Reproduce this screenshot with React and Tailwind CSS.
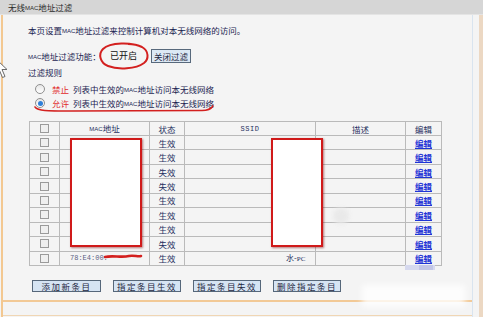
import React from "react";

const Mac = () => <span className="text-[6px] font-['Liberation_Sans',sans-serif] align-[1px]">MAC</span>;

const rows = ["生效", "生效", "失效", "失效", "生效", "生效", "生效", "失效", "生效"];

function Radio({ checked }) {
  return (
    <span className="w-[10px] h-[10px] rounded-full border border-[#8f8f8f] bg-gradient-to-b from-[#e6e6e6] to-[#ffffff] flex items-center justify-center">
      {checked && <span className="w-[5px] h-[5px] rounded-full bg-[#2f7fd8]" />}
    </span>
  );
}

function Btn({ children, w }) {
  return (
    <div className={`${w} h-[12px] bg-[#d6e4f3] border border-[#56677a] flex items-center justify-center text-[8.5px] leading-none tracking-[1.5px] text-[#1e2740]`}>
      {children}
    </div>
  );
}

export default function App() {
  return (
    <div className="relative w-[483px] h-[317px] overflow-hidden bg-[#f4f4f4] font-['Noto_Sans_CJK_SC','Liberation_Sans',sans-serif] text-[#1b2452]">
      <div className="h-[15px] bg-[#d6d6d6] border-b border-[#e4e4e4] pl-[8px] text-[8.5px] leading-[14px] text-[#2a2a2a]">
        无线<Mac />地址过滤
      </div>
      <div className="flex h-[302px]">
        <div className="w-[1px]" />
        <div className="w-[2px] bg-[#f3c891]" />
        <div className="w-[469px] flex flex-col">
          <div className="pl-[25px] text-[8.5px] leading-[12px] mt-[9px] whitespace-nowrap">
            本页设置<Mac />地址过滤来控制计算机对本无线网络的访问。
          </div>
          <div className="pl-[25px] mt-[12px] h-[14px] flex items-center text-[8.5px] whitespace-nowrap">
            <span className="w-[72px] shrink-0 whitespace-nowrap"><Mac />地址过滤功能：</span>
            <span className="ml-[10px] text-[#111] text-[9px] shrink-0">已开启</span>
            <div className="ml-[14px] w-[40px] h-[14px] shrink-0 bg-[#dce8f4] border border-[#58697c] flex items-center justify-center text-[8.5px] text-[#1e2740]">
              关闭过滤
            </div>
          </div>
          <div className="pl-[25px] mt-[3px] text-[8.5px] leading-[12px]">过滤规则</div>
          <div className="pl-[32px] mt-[5px] h-[12px] flex items-center text-[8.5px] whitespace-nowrap">
            <Radio />
            <span className="ml-[7px] text-[#e12a2a]">禁止</span>
            <span className="ml-[4px]">列表中生效的<Mac />地址访问本无线网络</span>
          </div>
          <div className="pl-[32px] mt-[2px] h-[12px] flex items-center text-[8.5px] whitespace-nowrap">
            <Radio checked />
            <span className="ml-[7px] text-[#e12a2a]">允许</span>
            <span className="ml-[4px]">列表中生效的<Mac />地址访问本无线网络</span>
          </div>
          <div className="pl-[26px] mt-[12px]">
            <table className="border-collapse w-[412px] table-fixed text-[8.5px] text-[#263060]">
              <colgroup>
                <col className="w-[30px]" />
                <col className="w-[90px]" />
                <col className="w-[35px]" />
                <col className="w-[131px]" />
                <col className="w-[90px]" />
                <col className="w-[36px]" />
              </colgroup>
              <thead>
                <tr className="h-[14px]">
                  <th className="border border-[#bababa] p-0 font-normal">
                    <div className="w-[9px] h-[9px] mx-auto border border-[#9a9a9a] bg-[#efefef]" />
                  </th>
                  <th className="border border-[#bababa] p-0 font-normal leading-[12px]"><Mac />地址</th>
                  <th className="border border-[#bababa] p-0 font-normal leading-[12px]">状态</th>
                  <th className="border border-[#bababa] p-0 font-normal leading-[12px] font-['Liberation_Mono',monospace] text-[7px] tracking-[0.5px]">SSID</th>
                  <th className="border border-[#bababa] p-0 font-normal leading-[12px]">描述</th>
                  <th className="border border-[#bababa] p-0 font-normal leading-[12px]">编辑</th>
                </tr>
              </thead>
              <tbody>
                {rows.map((s, i) => (
                  <tr key={i} className="h-[14.45px]">
                    <td className="border border-[#bababa] p-0">
                      <div className="w-[9px] h-[9px] mx-auto border border-[#9a9a9a] bg-[#efefef]" />
                    </td>
                    <td className="border border-[#bababa] p-0 leading-[12px]">
                      {i === rows.length - 1 && (
                        <div className="pl-[10px] flex items-center font-['Liberation_Mono',monospace] text-[7px] text-[#5b6283]">
                          78:E4:00:
                        </div>
                      )}
                    </td>
                    <td className="border border-[#bababa] p-0 text-center leading-[12px]">{s}</td>
                    <td className="border border-[#bababa] p-0 leading-[12px]">
                      {i === rows.length - 1 && <div className="pl-[101px] text-[8px]">水-<span className="font-['Liberation_Serif',serif] text-[7px]">PC</span></div>}
                    </td>
                    <td className="border border-[#bababa] p-0" />
                    <td className="border border-[#bababa] p-0 text-center leading-[12px]">
                      <span className="underline font-bold text-[#1f35d6]">编辑</span>
                    </td>
                  </tr>
                ))}
              </tbody>
            </table>
          </div>
          <div className="pl-[29px] mt-[14px] flex gap-[12px]">
            <Btn w="w-[69px]">添加新条目</Btn>
            <Btn w="w-[68px]">指定条目生效</Btn>
            <Btn w="w-[68px]">指定条目失效</Btn>
            <Btn w="w-[68px]">删除指定条目</Btn>
          </div>
          <div className="mt-[8px] h-[2px] bg-[#f2c996]" />
          <div className="flex-1" />
          <div className="h-[1px] bg-[#f0d6b4] mb-[1px]" />
        </div>
        <div className="w-[1px] bg-[#d9e4ef]" />
        <div className="w-[6px]" />
        <div className="w-[4px] bg-[#ecd8c3]" />
      </div>

      {/* overlays */}
      <svg className="absolute left-[98px] top-[42px]" width="52" height="29" viewBox="0 0 52 29">
        <path d="M44 5 C34 0 12 0 5 7 C0 12 2 21 10 24 C20 28 38 27 46 21 C51 17 51 9 44 5 C40 3 34 2 30 2" fill="none" stroke="#d3201f" strokeWidth="2" />
      </svg>
      <svg className="absolute left-[32px] top-[103px]" width="186" height="12" viewBox="0 0 186 12">
        <path d="M3 4 C6 8 14 8 40 8 L170 7.5 C176 7.5 179 6 181 3" fill="none" stroke="#d3201f" strokeWidth="1.6" strokeLinecap="round" />
      </svg>
      <div className="absolute left-[70px] top-[138px] w-[72px] h-[109px] bg-white border-2 border-[#d01a1a] shadow-[1px_1px_2px_rgba(120,0,0,0.5)]" />
      <div className="absolute left-[271px] top-[138px] w-[52px] h-[109px] bg-white border-2 border-[#d01a1a] shadow-[1px_1px_2px_rgba(120,0,0,0.5)]" />
      <svg className="absolute left-[103px] top-[253px]" width="40" height="8" viewBox="0 0 40 8">
        <path d="M2 4 C10 2 18 5 26 3 C31 2 35 4 38 3" fill="none" stroke="#d3201f" strokeWidth="2.6" strokeLinecap="round" />
      </svg>
      <div className="absolute left-[333px] top-[208px] w-[16px] h-[16px] rounded-full bg-[#e9e9e9] blur-[2px]" />
      <div className="absolute left-[405px] top-[265px] w-[30px] h-[5px] bg-[#d6d9ee]">
        <div className="ml-[14px] w-[14px] h-[5px] bg-[#c2c6e6]" />
      </div>
      <div className="absolute left-[362px] top-[285px] w-[103px] h-[22px] bg-white/80 blur-[3px]" />
      <svg className="absolute left-[-5px] top-[58px]" width="14" height="22" viewBox="0 0 14 22">
        <path d="M1 1 L1 16 L4.5 12.5 L7.5 19.5 L10 18.5 L7 11.5 L12 11.5 Z" fill="#ffffff" stroke="#6a6a6a" strokeWidth="1" strokeLinejoin="round" />
      </svg>
    </div>
  );
}
